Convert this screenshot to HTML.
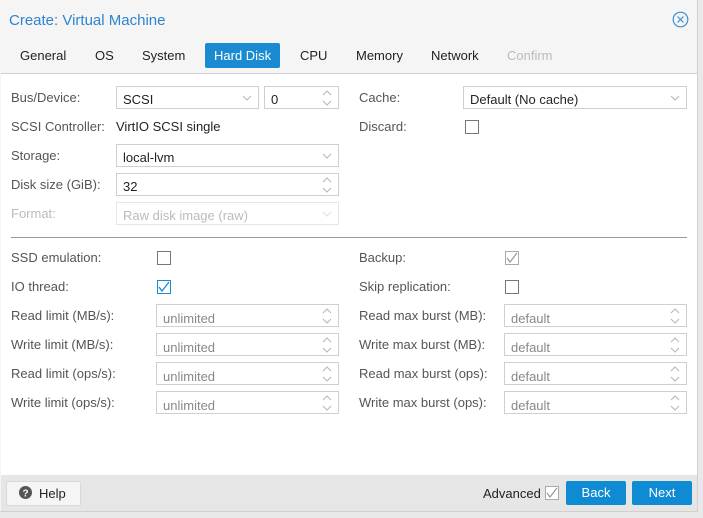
<!DOCTYPE html><html><head><style>
body{margin:0;width:703px;height:518px;background:#e9e9e9;font-family:"Liberation Sans",sans-serif;font-size:13px;color:#333;position:relative;overflow:hidden}
.a{position:absolute}
#win{left:0;top:0;width:697px;height:511px;background:#f5f5f5;border-right:1px solid #d0d0d0;border-bottom:1px solid #d0d0d0}
.t{top:48px;font-size:13px;color:#222}
.lbl{color:#555;font-size:13px}
.inp{border:1px solid #cfcfcf;background:#fff;height:23px;box-sizing:border-box;padding:5px 6px 0;font-size:13px;color:#222}
.dis{color:#bbb;border-color:#e6e6e6}
.ph{color:#888}
.cb{width:12px;height:12px;border:1px solid #777;background:#fff}
.arr{position:absolute;right:6px;top:3px}
.arr path{stroke:#b5b5b5}
</style></head><body>
<div class="a" id="win"></div>
<div class="a" style="left:9px;top:12px;font-size:15px;color:#2f84cf">Create: Virtual Machine</div>
<svg class="a" style="left:672px;top:11px" width="17" height="17" viewBox="0 0 17 17"><circle cx="8.5" cy="8.5" r="7.3" fill="none" stroke="#3a8fd6" stroke-width="1.2"/><path d="M5.5 5.5L11.5 11.5M11.5 5.5L5.5 11.5" stroke="#3a8fd6" stroke-width="1.2"/></svg>
<div class="a t" style="left:20px">General</div>
<div class="a t" style="left:95px">OS</div>
<div class="a t" style="left:142px">System</div>
<div class="a" style="left:205px;top:43px;width:75px;height:25px;background:#1b8bd1;border-radius:2px"></div>
<div class="a t" style="left:214px;color:#fff">Hard Disk</div>
<div class="a t" style="left:300px">CPU</div>
<div class="a t" style="left:356px">Memory</div>
<div class="a t" style="left:431px">Network</div>
<div class="a t" style="left:507px;color:#bbb">Confirm</div>
<div class="a" style="left:1px;top:73px;width:696px;height:401px;background:#fff;border-top:1px solid #d0d0d0;border-bottom:1px solid #d0d0d0"></div>

<div class="a lbl" style="left:11px;top:90px">Bus/Device:</div>
<div class="a inp" style="left:116px;top:86px;width:143px">SCSI<svg class="arr" width="10" height="14"><path d="M1 6l4 4 4-4" fill="none"/></svg></div>
<div class="a inp" style="left:264px;top:86px;width:75px">0<svg class="arr" width="10" height="16"><path d="M1 5l4-4 4 4M1 11l4 4 4-4" fill="none"/></svg></div>
<div class="a lbl" style="left:11px;top:119px">SCSI Controller:</div>
<div class="a" style="left:116px;top:119px;color:#222">VirtIO SCSI single</div>
<div class="a lbl" style="left:11px;top:148px">Storage:</div>
<div class="a inp" style="left:116px;top:144px;width:223px">local-lvm<svg class="arr" width="10" height="14"><path d="M1 6l4 4 4-4" fill="none"/></svg></div>
<div class="a lbl" style="left:11px;top:177px">Disk size (GiB):</div>
<div class="a inp" style="left:116px;top:173px;width:223px">32<svg class="arr" width="10" height="16"><path d="M1 5l4-4 4 4M1 11l4 4 4-4" fill="none"/></svg></div>
<div class="a lbl" style="left:11px;top:206px;color:#bbb">Format:</div>
<div class="a inp dis" style="left:116px;top:202px;width:223px">Raw disk image (raw)<svg class="arr" width="10" height="14"><path d="M1 6l4 4 4-4" fill="none" style="stroke:#ddd"/></svg></div>

<div class="a lbl" style="left:359px;top:90px">Cache:</div>
<div class="a inp" style="left:463px;top:86px;width:224px">Default (No cache)<svg class="arr" width="10" height="14"><path d="M1 6l4 4 4-4" fill="none"/></svg></div>
<div class="a lbl" style="left:359px;top:119px">Discard:</div>
<div class="a cb" style="left:465px;top:120px"></div>

<div class="a" style="left:11px;top:237px;width:676px;height:1px;background:#999"></div>

<div class="a lbl" style="left:11px;top:250px">SSD emulation:</div>
<div class="a cb" style="left:157px;top:251px"></div>
<div class="a lbl" style="left:11px;top:279px">IO thread:</div>
<div class="a cb" style="left:157px;top:280px;border-color:#1b8bd1"><svg class="a" style="left:0;top:0" width="12" height="12"><path d="M1 6l3 4 7-9" fill="none" stroke="#1b8bd1" stroke-width="1.3"/></svg></div>
<div class="a lbl" style="left:359px;top:250px">Backup:</div>
<div class="a cb" style="left:505px;top:251px;border-color:#aaa"><svg class="a" style="left:0;top:0" width="12" height="12"><path d="M1 6l3 4 7-9" fill="none" stroke="#999" stroke-width="1.2"/></svg></div>
<div class="a lbl" style="left:359px;top:279px">Skip replication:</div>
<div class="a cb" style="left:505px;top:280px"></div>

<div class="a lbl" style="left:11px;top:308px">Read limit (MB/s):</div>
<div class="a lbl" style="left:11px;top:337px">Write limit (MB/s):</div>
<div class="a lbl" style="left:11px;top:366px">Read limit (ops/s):</div>
<div class="a lbl" style="left:11px;top:395px">Write limit (ops/s):</div>
<div class="a lbl" style="left:359px;top:308px">Read max burst (MB):</div>
<div class="a lbl" style="left:359px;top:337px">Write max burst (MB):</div>
<div class="a lbl" style="left:359px;top:366px">Read max burst (ops):</div>
<div class="a lbl" style="left:359px;top:395px">Write max burst (ops):</div>
<div class="a inp ph" style="left:156px;top:304px;width:183px;padding-top:6px">unlimited<svg class="arr" width="10" height="16"><path d="M1 5l4-4 4 4M1 11l4 4 4-4" fill="none"/></svg></div>
<div class="a inp ph" style="left:156px;top:333px;width:183px;padding-top:6px">unlimited<svg class="arr" width="10" height="16"><path d="M1 5l4-4 4 4M1 11l4 4 4-4" fill="none"/></svg></div>
<div class="a inp ph" style="left:156px;top:362px;width:183px;padding-top:6px">unlimited<svg class="arr" width="10" height="16"><path d="M1 5l4-4 4 4M1 11l4 4 4-4" fill="none"/></svg></div>
<div class="a inp ph" style="left:156px;top:391px;width:183px;padding-top:6px">unlimited<svg class="arr" width="10" height="16"><path d="M1 5l4-4 4 4M1 11l4 4 4-4" fill="none"/></svg></div>
<div class="a inp ph" style="left:504px;top:304px;width:183px;padding-top:6px">default<svg class="arr" width="10" height="16"><path d="M1 5l4-4 4 4M1 11l4 4 4-4" fill="none"/></svg></div>
<div class="a inp ph" style="left:504px;top:333px;width:183px;padding-top:6px">default<svg class="arr" width="10" height="16"><path d="M1 5l4-4 4 4M1 11l4 4 4-4" fill="none"/></svg></div>
<div class="a inp ph" style="left:504px;top:362px;width:183px;padding-top:6px">default<svg class="arr" width="10" height="16"><path d="M1 5l4-4 4 4M1 11l4 4 4-4" fill="none"/></svg></div>
<div class="a inp ph" style="left:504px;top:391px;width:183px;padding-top:6px">default<svg class="arr" width="10" height="16"><path d="M1 5l4-4 4 4M1 11l4 4 4-4" fill="none"/></svg></div>

<div class="a" style="left:1px;top:475px;width:696px;height:36px;background:#e6e6e6"></div>
<div class="a" style="left:6px;top:481px;width:73px;height:23px;background:#f5f5f5;border:1px solid #d8d8d8;border-radius:2px"></div>
<svg class="a" style="left:19px;top:486px" width="13" height="13"><circle cx="6.5" cy="6.5" r="6.5" fill="#555"/><text x="6.5" y="10.5" font-size="10" font-weight="bold" fill="#fff" text-anchor="middle" font-family="Liberation Sans">?</text></svg>
<div class="a" style="left:39px;top:486px;color:#222">Help</div>
<div class="a" style="left:483px;top:486px;color:#222">Advanced</div>
<div class="a cb" style="left:545px;top:486px;border-color:#aaa"><svg class="a" style="left:0;top:0" width="12" height="12"><path d="M1 6l3 4 7-9" fill="none" stroke="#999" stroke-width="1.2"/></svg></div>
<div class="a" style="left:566px;top:481px;width:60px;height:24px;background:#0f8bd3;border-radius:2px;color:#fff;text-align:center;line-height:24px">Back</div>
<div class="a" style="left:632px;top:481px;width:60px;height:24px;background:#0f8bd3;border-radius:2px;color:#fff;text-align:center;line-height:24px">Next</div>
</body></html>
